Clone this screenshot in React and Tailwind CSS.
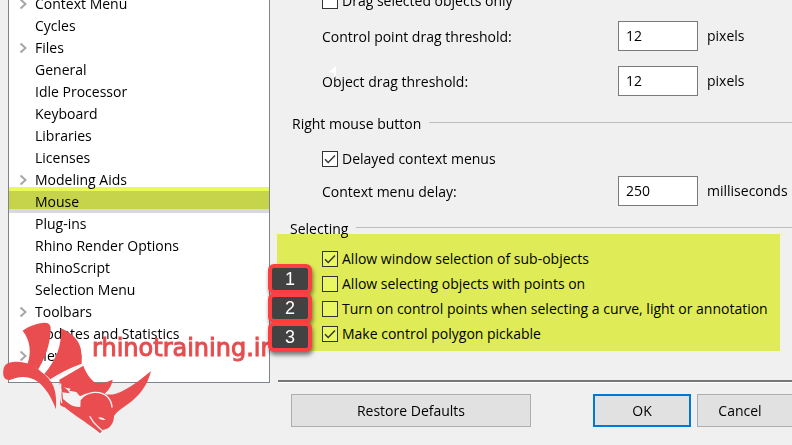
import React from "react";

const pages = [
  { name: "Context Menu", expandable: true },
  { name: "Cycles" },
  { name: "Files", expandable: true },
  { name: "General" },
  { name: "Idle Processor" },
  { name: "Keyboard" },
  { name: "Libraries" },
  { name: "Licenses" },
  { name: "Modeling Aids", expandable: true },
  { name: "Mouse", selected: true },
  { name: "Plug-ins" },
  { name: "Rhino Render Options" },
  { name: "RhinoScript" },
  { name: "Selection Menu" },
  { name: "Toolbars", expandable: true },
  { name: "Updates and Statistics" },
  { name: "View", expandable: true },
];

function Chevron() {
  return (
    <svg viewBox="0 0 8 12" className="h-3 w-2" fill="none" stroke="#a6a6a6" strokeWidth="2">
      <path d="M1.5 1.5 6.5 6l-5 4.5" />
    </svg>
  );
}

function PageTree() {
  return (
    <nav className="h-[383px] w-[262px] shrink-0 overflow-hidden border border-t-0 border-[#7f8390] bg-white">
      <ul className="-mt-[7px]">
        {pages.map((page) => (
          <li
            key={page.name}
            className={`relative flex h-[22px] items-center ${page.selected ? "bg-[#d9d9d9]" : ""}`}
          >
            <span className="flex w-[26px] shrink-0 justify-center pl-px">{page.expandable && <Chevron />}</span>
            <a href="#" className="whitespace-nowrap">{page.name}</a>
            {page.selected && (
              <span className="absolute inset-x-0 -top-1 h-[22px] bg-[#e8fa58] mix-blend-multiply" />
            )}
          </li>
        ))}
      </ul>
    </nav>
  );
}

function Check({ label, checked, marked }) {
  return (
    <label className="flex h-[25px] items-center gap-1 whitespace-nowrap">
      <span className="relative flex size-4 shrink-0">
        <input
          type="checkbox"
          defaultChecked={checked}
          className={`peer size-4 appearance-none border border-[#333] ${marked ? "bg-[#e9f763]" : "bg-white"}`}
        />
        <svg
          viewBox="0 0 16 16"
          className="pointer-events-none absolute inset-0 hidden size-4 peer-checked:block"
          fill="none"
          stroke="#333"
          strokeWidth="1.4"
        >
          <path d="M3 8.2 6.2 11.4 13 4.6" />
        </svg>
      </span>
      {label}
    </label>
  );
}

function NumberRow({ id, label, value, unit }) {
  return (
    <div className="flex h-[30px] items-center whitespace-nowrap">
      <label htmlFor={id} className="w-[296px] shrink-0 pt-px">{label}</label>
      <input
        id={id}
        type="text"
        defaultValue={value}
        className="h-[30px] w-20 shrink-0 border border-[#7a7a7a] bg-white px-[7px] pb-[2px]"
      />
      <span className="ml-[9px]">{unit}</span>
    </div>
  );
}

function SectionTitle({ children }) {
  return (
    <h2 className="flex h-5 items-center gap-2 whitespace-nowrap">
      {children}
      <span className="mb-1 h-px grow bg-[#bdbdbd]" />
    </h2>
  );
}

function Badge({ children }) {
  return (
    <span className="flex h-[30px] w-11 items-center justify-center rounded-md border-4 border-[#fc3f41] bg-[#424242] font-['Liberation_Sans',sans-serif] text-lg leading-none text-white shadow-[1px_3px_4px_rgba(0,0,0,0.5)]">
      {children}
    </span>
  );
}

function Watermark() {
  return (
    <div className="pointer-events-none absolute top-[310px] left-0 h-[135px] w-[270px] overflow-hidden">
      <svg viewBox="0 0 480 405" className="absolute top-0 left-0 h-[135px] w-40">
        <g fill="#e94d4f">
          <path d="M68 62C88 48 110 39 135 38C148 39 153 46 152 58C151 98 139 138 115 178Q100 167 82 163C95 128 91 91 68 62Z" />
          <path d="M182 55C211 66 236 88 242 115Q247 137 245 161Q194 179 151 208Q144 199 133 192C168 151 187 105 182 55Z" />
          <path d="M10 181C12 164 22 157 40 156C72 153 101 164 124 186C158 210 172 239 168 298C151 253 125 213 90 204C66 196 45 204 29 210C12 211 8 198 10 181Z" />
          <path d="M178 209L250 167C259 191 271 208 286 218C306 222 321 216 338 209C335 228 326 240 314 251C328 257 347 253 369 242C402 225 429 203 453 183C443 225 418 258 385 281C365 296 348 306 342 319C341 342 329 357 309 360L300 370C270 344 232 323 194 292Q179 287 180 281L185 240Q177 225 178 209Z" />
        </g>
        <g fill="none" stroke="#f3f3f3" strokeLinecap="round" strokeLinejoin="round">
          <path strokeWidth="5" d="M151 211Q196 184 247 164" />
          <path strokeWidth="4" d="M182 222Q181 259 185 278" />
          <path strokeWidth="4" d="M242 267C263 243 301 241 321 259C331 269 335 278 336 291" />
          <path strokeWidth="4" d="M270 320C281 343 294 349 306 361" />
        </g>
        <path fill="#f3f3f3" d="M190 232L212 236L208 242L229 246L240 259L260 250L242 270L241 291C215 292 203 278 189 267L187 247L209 250Q203 237 190 232Z" />
        <path fill="#f3f3f3" d="M294 323Q307 319 317 330Q304 332 294 323Z" />
      </svg>
      <span className="absolute top-[24px] left-[92px] font-['DejaVu_Sans',sans-serif] text-2xl leading-7 whitespace-nowrap text-[#e64d4f] [-webkit-text-stroke:1px_#e64d4f]">
        rhinotraining.ir
      </span>
    </div>
  );
}

export default function App() {
  return (
    <div className="relative min-h-screen overflow-hidden bg-[#f0f0f0] font-['Open_Sans','Noto_Sans',sans-serif] text-sm leading-5 text-black">
      <div className="flex pl-2">
        <PageTree />
        <main className="min-w-0 grow">
          <div className="-mt-3 pl-[52px]">
            <Check label="Drag selected objects only" />
            <div className="mt-2 flex flex-col gap-[15px]">
              <NumberRow id="cp-threshold" label="Control point drag threshold:" value="12" unit="pixels" />
              <div className="relative">
                <NumberRow id="obj-threshold" label="Object drag threshold:" value="12" unit="pixels" />
                <svg viewBox="0 0 8 13" className="pointer-events-none absolute top-0 left-[7px] h-[13px] w-2" fill="#fff">
                  <path d="M7 0v10L5 12V7L0 6Z" />
                </svg>
              </div>
            </div>
          </div>
          <div className="mt-[18px] pl-[22px]">
            <SectionTitle>Right mouse button</SectionTitle>
          </div>
          <div className="mt-3 pl-[52px]">
            <Check label="Delayed context menus" checked />
            <div className="mt-[5px]">
              <NumberRow id="menu-delay" label="Context menu delay:" value="250" unit="milliseconds" />
            </div>
          </div>
          <div className="relative z-10 mt-[13px] pl-5">
            <SectionTitle>Selecting</SectionTitle>
          </div>
          <div className="relative mr-3 -mt-[5px] ml-[7px] h-[117px] bg-[#dfec57] pt-3 pl-[45px]">
            <Check label="Allow window selection of sub-objects" checked marked />
            <Check label="Allow selecting objects with points on" marked />
            <Check label="Turn on control points when selecting a curve, light or annotation" marked />
            <Check label="Make control polygon pickable" checked marked />
            <div className="absolute top-[30px] -left-[9px] z-20 flex flex-col -space-y-px">
              <Badge>1</Badge>
              <Badge>2</Badge>
              <Badge>3</Badge>
            </div>
          </div>
          <div className="mt-[29px] ml-2 h-[3px] border-t-2 border-b border-t-[#777] border-b-white" />
          <footer className="mt-[11px] flex pl-[21px]">
            <button className="h-[33px] w-60 shrink-0 border border-[#adadad] bg-[#e1e1e1]">Restore Defaults</button>
            <button className="ml-[62px] h-[33px] w-[98px] shrink-0 border-2 border-[#0078d7] bg-[#e1e1e1]">OK</button>
            <button className="ml-[6px] h-[33px] w-[98px] shrink-0 border border-[#adadad] bg-[#e1e1e1] pr-3">Cancel</button>
          </footer>
        </main>
      </div>
      <Watermark />
    </div>
  );
}
